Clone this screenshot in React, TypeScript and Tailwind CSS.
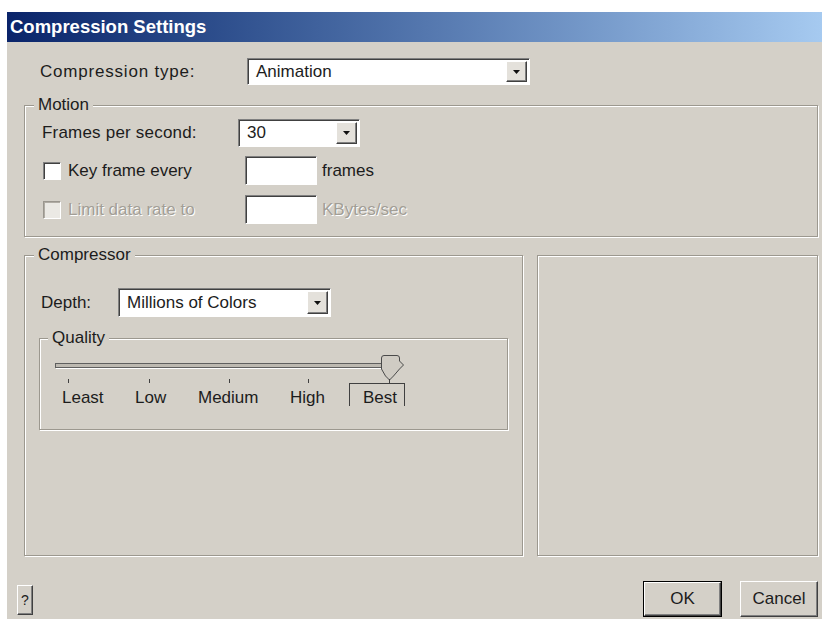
import React from "react";

const sunken =
  "border border-t-[#808080] border-l-[#808080] border-b-white border-r-white shadow-[inset_1px_1px_0_#404040]";

function ArrowButton() {
  return (
    <div className="w-[21px] flex items-center justify-center bg-[#e4e1db] border border-t-white border-l-white border-b-[#404040] border-r-[#404040] shadow-[inset_-1px_-1px_0_#808080]">
      <svg width="7" height="4" viewBox="0 0 7 4">
        <polygon points="0,0 7,0 3.5,4" fill="#111" />
      </svg>
    </div>
  );
}

function Dropdown({ className, value }: { className: string; value: string }) {
  return (
    <div className={`flex items-stretch bg-white p-[2px] ${sunken} ${className}`}>
      <span className="flex-1 pl-[6px] flex items-center">{value}</span>
      <ArrowButton />
    </div>
  );
}

function TextBox() {
  return <div className={`w-[72px] h-[29px] bg-white ${sunken}`} />;
}

function Checkbox({ disabled }: { disabled?: boolean }) {
  return disabled ? (
    <div className="w-[18px] h-[18px] bg-[#ebe9e4] border border-t-[#9a968e] border-l-[#9a968e] border-b-white border-r-white shadow-[inset_1px_1px_0_#b0aca4]" />
  ) : (
    <div className={`w-[18px] h-[18px] bg-white ${sunken}`} />
  );
}

const etched = "border border-[#9c988f] shadow-[inset_1px_1px_0_#fff,1px_1px_0_#fff]";

function Button({ className, label }: { className: string; label: string }) {
  return (
    <div
      className={`flex items-center justify-center bg-[#d4d0c8] border border-t-white border-l-white border-b-[#404040] border-r-[#404040] shadow-[inset_-1px_-1px_0_#808080] ${className}`}
    >
      {label}
    </div>
  );
}

function QualitySlider() {
  return (
    <div className="flex flex-col mt-[2px]">
      <svg width="467" height="33" viewBox="0 0 467 33" className="block">
        {/* track */}
        <rect x="15.5" y="13.5" width="344" height="4" fill="#bdb9b1" stroke="#5f5f5f" />
        <line x1="16" y1="18.5" x2="360" y2="18.5" stroke="#ffffff" />
        {/* ticks */}
        <line x1="28.5" y1="29" x2="28.5" y2="33" stroke="#404040" />
        <line x1="109.5" y1="29" x2="109.5" y2="33" stroke="#404040" />
        <line x1="189.5" y1="29" x2="189.5" y2="33" stroke="#404040" />
        <line x1="268.5" y1="29" x2="268.5" y2="33" stroke="#404040" />
        {/* thumb */}
        <path
          d="M341.5,8 Q341.5,5.5 344,5.5 L357,5.5 Q359.5,5.5 359.5,8 L359.5,11 L363.5,15 L359.5,19 L353.5,26 L349.5,30 L345.5,26 L341.5,19 Z"
          fill="#cfcbc3"
          stroke="#4a4a4a"
        />
        <line x1="349.5" y1="29" x2="349.5" y2="33" stroke="#404040" />
      </svg>
      <div className="flex h-[23px] items-start">
        <span className="ml-[22px] w-[73px] pt-[5px]">Least</span>
        <span className="w-[63px] pt-[5px]">Low</span>
        <span className="w-[92px] pt-[5px]">Medium</span>
        <span className="w-[59px] pt-[5px]">High</span>
        <span className="w-[56px] h-[23px] pl-[13px] pt-[4px] border-t border-l border-r border-[#404040]">
          Best
        </span>
      </div>
    </div>
  );
}

export default function App() {
  return (
    <div className="w-[822px] h-[619px] bg-white pt-[12px] pl-[7px] overflow-hidden font-['Liberation_Sans',Arial,sans-serif] text-[17px] leading-[20px] text-[#1c1c1c]">
      <div className="w-[815px] h-[607px] flex flex-col">
        {/* title bar */}
        <div className="h-[30px] shrink-0 bg-gradient-to-r from-[#0a246a] to-[#a6caf0] flex items-center pl-[3px]">
          <span className="text-white font-bold text-[18.5px] tracking-[0px]">Compression Settings</span>
        </div>

        <div className="flex-1 bg-[#d4d0c8] flex flex-col">
          {/* compression type */}
          <div className="flex items-center mt-[16px] pl-[33px] h-[27px]">
            <span className="w-[207px] tracking-[0.8px]">Compression type:</span>
            <Dropdown className="w-[283px] h-[27px]" value="Animation" />
          </div>

          {/* motion */}
          <fieldset className={`mt-[10px] ml-[17px] mr-[4px] h-[142px] p-0 m-0 min-w-0 ${etched}`}>
            <legend className="ml-[9px] px-[4px] h-[20px] bg-[#d4d0c8]">Motion</legend>
            <div className="flex items-center mt-[4px] pl-[17px] h-[28px]">
              <span className="w-[196px] tracking-[0.2px]">Frames per second:</span>
              <Dropdown className="w-[122px] h-[28px]" value="30" />
            </div>
            <div className="flex items-center mt-[9px] pl-[18px] h-[29px]">
              <Checkbox />
              <span className="ml-[7px] w-[177px]">Key frame every</span>
              <TextBox />
              <span className="ml-[5px]">frames</span>
            </div>
            <div className="flex items-center mt-[10px] pl-[18px] h-[29px] text-[#a29e96] [text-shadow:1px_1px_0_#fff]">
              <Checkbox disabled />
              <span className="ml-[7px] w-[177px]">Limit data rate to</span>
              <TextBox />
              <span className="ml-[5px]">KBytes/sec</span>
            </div>
          </fieldset>

          {/* compressor + preview */}
          <div className="flex items-start mt-[8px] ml-[17px] gap-[14px]">
            <fieldset className={`w-[499px] h-[311px] p-0 m-0 min-w-0 ${etched}`}>
              <legend className="ml-[9px] px-[4px] h-[20px] bg-[#d4d0c8]">Compressor</legend>
              <div className="flex items-center mt-[23px] pl-[16px] h-[29px]">
                <span className="w-[77px]">Depth:</span>
                <Dropdown className="w-[213px] h-[29px]" value="Millions of Colors" />
              </div>
              <fieldset className={`mt-[11px] ml-[14px] w-[469px] h-[102px] p-0 min-w-0 ${etched}`}>
                <legend className="ml-[8px] px-[4px] h-[20px] bg-[#d4d0c8]">Quality</legend>
                <QualitySlider />
              </fieldset>
            </fieldset>
            <div className={`mt-[10px] w-[281px] h-[301px] ${etched}`} />
          </div>

          {/* dialog buttons */}
          <div className="flex items-start mt-[25px]">
            <Button className="ml-[10px] mt-[4px] w-[16px] h-[30px] text-[14px]" label="?" />
            <div className="flex-1" />
            <div className="border border-black">
              <Button className="w-[77px] h-[34px]" label="OK" />
            </div>
            <Button className="ml-[18px] mr-[4px] w-[78px] h-[36px]" label="Cancel" />
          </div>
        </div>
      </div>
    </div>
  );
}
